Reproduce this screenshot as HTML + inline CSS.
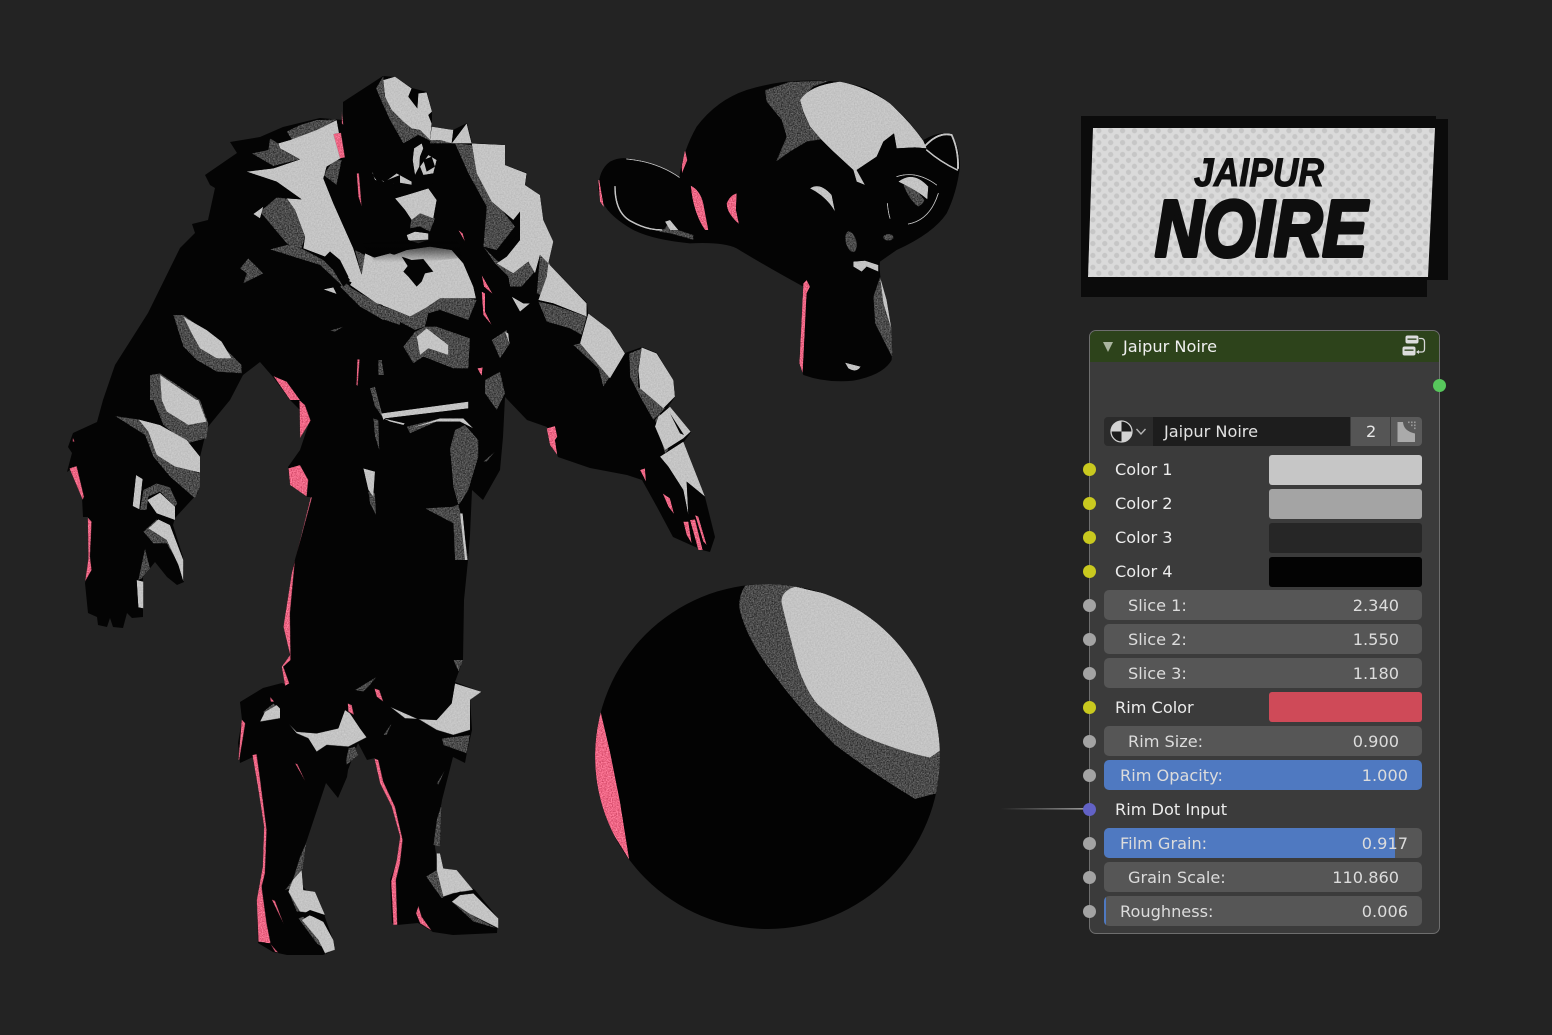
<!DOCTYPE html>
<html><head><meta charset="utf-8">
<style>
html,body{margin:0;padding:0;background:#232323;width:1552px;height:1035px;overflow:hidden}
body{position:relative;font-family:"DejaVu Sans","Liberation Sans",sans-serif;font-size:16.15px}
svg.art{position:absolute;left:0;top:0}
.node{position:absolute;left:1089px;top:330px;width:349px;height:602px;background:#3b3b3b;border:1.5px solid #6e6e6e;border-radius:7px;overflow:hidden}
.hd{position:absolute;left:0;top:0;right:0;height:31px;background:#2d431b}
.t{position:absolute;white-space:nowrap;line-height:32px;height:32px;color:#ececec}
.f{position:absolute;height:29.5px;border-radius:5px}
.s{background:#565656;left:1104px;width:318px}
.sw{left:1269px;width:153px;border-radius:3px}
.sl{color:#dcdcdc}
.so{position:absolute;width:13px;height:13px;border-radius:50%}
.g{background:#a3a3a3}.y{background:#c9c91f}
.abs{position:absolute}
</style></head><body>
<svg class="art" width="1552" height="1035" viewBox="0 0 1552 1035">
<defs>
<filter id="n1" filterUnits="userSpaceOnUse" x="0" y="0" width="1552" height="1035" color-interpolation-filters="sRGB">
<feTurbulence type="fractalNoise" baseFrequency="0.75" numOctaves="2" seed="4" result="t"/>
<feColorMatrix in="t" type="matrix" values="1 0 0 0 0 1 0 0 0 0 1 0 0 0 0 0 0 0 0 1" result="m"/>
<feComposite in="SourceGraphic" in2="m" operator="arithmetic" k1="0" k2="1" k3="0.55" k4="-0.275" result="c"/>
<feComposite in="c" in2="SourceAlpha" operator="in"/>
</filter>
<filter id="n2" filterUnits="userSpaceOnUse" x="0" y="0" width="1552" height="1035" color-interpolation-filters="sRGB">
<feTurbulence type="fractalNoise" baseFrequency="0.7" numOctaves="2" seed="9" result="t"/>
<feColorMatrix in="t" type="matrix" values="1 0 0 0 0 1 0 0 0 0 1 0 0 0 0 0 0 0 0 1" result="m"/>
<feComposite in="SourceGraphic" in2="m" operator="arithmetic" k1="0" k2="1" k3="0.14" k4="-0.07" result="c"/>
<feComposite in="c" in2="SourceAlpha" operator="in"/>
</filter>
<filter id="n3" filterUnits="userSpaceOnUse" x="0" y="0" width="1552" height="1035" color-interpolation-filters="sRGB">
<feTurbulence type="fractalNoise" baseFrequency="0.8" numOctaves="2" seed="2" result="t"/>
<feColorMatrix in="t" type="matrix" values="1 0 0 0 0 1 0 0 0 0 1 0 0 0 0 0 0 0 0 1" result="m"/>
<feComposite in="SourceGraphic" in2="m" operator="arithmetic" k1="0" k2="1" k3="0.5" k4="-0.25" result="c"/>
<feComposite in="c" in2="SourceAlpha" operator="in"/>
</filter>
<pattern id="dots" width="8.4" height="8.4" patternUnits="userSpaceOnUse" patternTransform="rotate(45)">
<rect width="8.4" height="8.4" fill="#dadada"/><circle cx="4.2" cy="4.2" r="2.6" fill="#c6c6c6"/>
</pattern>
<clipPath id="sph"><circle cx="767.5" cy="756.5" r="172.5"/></clipPath>
<linearGradient id="lk" x1="0" x2="1" y1="0" y2="0"><stop offset="0" stop-color="#888" stop-opacity="0"/><stop offset="1" stop-color="#999"/></linearGradient>
<linearGradient id="fade" x1="0" x2="0" y1="0" y2="1"><stop offset="0" stop-color="#040404"/><stop offset="1" stop-color="#040404" stop-opacity="0"/></linearGradient>
</defs>

<!-- character silhouette -->
<polygon fill="#040404" points="383,76 395,77 412,88 427,92 432,112 432,127 453,130 467,123 472,143 505,145 505,165 527,173 525,185 540,195 543,220 553,242 548,263 587,303 588,313 610,330 625,353 642,347 657,353 673,380 675,397 668,407 691,432 683,443 705,497 715,537 710,552 702,550 673,537 657,507 642,480 627,475 590,468 558,457 547,427 527,420 505,397 503,437 500,470 483,500 472,490 470,535 468,560 464,600 463,660 455,682 482,692 470,698 472,730 467,752 465,763 453,757 442,800 435,847 438,867 475,890 498,918 497,933 453,935 433,932 418,923 397,925 392,923 390,880 400,853 402,837 393,803 380,777 375,758 367,760 358,743 348,770 347,777 338,798 326,783 307,840 297,867 303,887 320,903 333,940 335,950 323,955 287,955 273,952 258,943 257,900 263,873 265,827 253,757 240,763 238,743 242,720 240,702 263,688 282,683 287,685 282,667 290,657 285,627 293,567 312,497 307,497 290,483 288,467 300,450 310,420 290,400 273,377 260,362 243,375 230,400 207,428 200,457 198,493 175,518 173,525 183,557 184,582 177,585 167,577 155,562 143,577 143,617 132,618 127,613 123,628 113,627 110,618 107,627 98,625 97,617 88,613 85,583 90,563 88,517 83,517 82,497 70,470 67,472 72,453 68,447 73,433 97,422 103,400 115,365 148,313 180,248 195,233 192,224 208,220 215,188 210,185 205,175 237,153 230,142 260,137 283,127 320,118 343,120 343,102"/>
<!-- monkey silhouette -->
<g transform="translate(590,70) scale(.33333)">
<path fill="#040404" d="M25 360 Q25 300 60 275 Q85 262 110 265 Q190 272 268 320 Q280 240 320 170 Q380 90 470 60 Q560 32 650 32 Q750 28 830 55 Q900 90 960 160 L1000 210 Q1050 180 1085 195 Q1110 230 1110 290 Q1100 370 1070 430 Q1030 490 920 540 L870 575 Q865 620 890 700 Q910 790 905 870 Q880 915 790 932 Q710 940 640 915 L628 880 L640 650 Q530 590 440 535 Q400 515 300 520 Q190 510 130 480 Q60 440 40 400 Z"/>
</g>
<!-- sphere -->
<circle cx="767.5" cy="756.5" r="172.5" fill="#030303"/>

<!-- mid gray -->
<g filter="url(#n1)" fill="#4b4b4b">
<g clip-path="url(#sph)"><g transform="translate(585,575) scale(.33333)">
<path d="M490 20 Q455 60 465 110 Q490 200 560 290 Q640 400 750 510 Q870 600 990 672 L1055 655 L1080 530 L640 20 Z"/>
</g></g>
<g transform="translate(60,60) scale(.33333)">
<polygon points="630,235 655,250 660,265 720,298 640,318 575,280 625,270"/>
<polygon points="680,215 720,195 770,180 830,178 770,212 700,245"/>
<polygon points="600,455 650,412 680,415 705,450 735,530 725,565 680,550"/>
<polygon points="565,595 610,640 550,670 560,640 540,625"/>
<polygon points="340,765 370,765 440,815 510,880 545,915 545,940 470,935 410,900 370,860"/>
<polygon points="270,945 300,940 420,1020 270,1020"/>
<polygon points="790,345 820,300 845,300 830,375"/>
<polygon points="885,570 905,645 925,590"/>
<polygon points="630,568 690,552 730,568 790,600 880,690 970,755 1020,775 1020,795 960,775 860,690 780,615"/>
<polygon points="955,900 965,900 972,945 955,945"/>
<polygon points="810,812 850,800 825,815"/>
</g>
<g transform="translate(340,60) scale(.33333)">
<polygon points="130,48 108,85 125,125 150,180 190,250 235,225 275,245 230,150 135,110"/>
<polygon points="275,215 340,208 335,250 270,250"/>
<polygon points="345,250 395,255 420,345 470,430 525,500 470,570 430,560 440,440 385,340"/>
<polygon points="430,560 465,610 505,650 510,680 545,680 580,640 590,590 600,585 590,700 610,710 635,650 630,610 600,585 565,605 520,640 470,600"/>
<polygon points="10,670 130,740 150,745 210,770 295,715 385,715 410,720 385,780 300,750 265,760 255,800 225,810 150,770 130,780 60,740 0,680"/>
<polygon points="190,860 225,815 255,800 290,800 390,835 385,925 340,925 250,890 220,910"/>
<polygon points="90,985 105,980 130,1075 105,1040"/>
<polygon points="200,1100 300,1075 370,1075 400,1105 360,1085 290,1085 210,1120"/>
<polygon points="345,1110 375,1095 415,1140 415,1190 385,1290 360,1330 340,1340 255,1345 340,1390 345,1500 385,1500 365,1370 340,1280 330,1165"/>
<polygon points="100,1075 115,1080 118,1170 105,1130"/>
<polygon points="85,1295 105,1300 108,1365 90,1330"/>
<polygon points="115,905 125,900 130,945 115,945"/>
<polygon points="435,960 480,935 495,1000 470,1050 435,1000"/>
<polygon points="455,840 500,810 510,850 480,895"/>
<polygon points="430,1205 465,1175 440,1205"/>
<polygon points="595,725 640,735 740,770 725,825 690,805 620,785"/>
<polygon points="700,855 720,850 810,950 790,980 775,925"/>
<polygon points="868,880 905,865 895,925 895,980 975,1045 940,1080 900,1010 870,950"/>
<polygon points="945,1080 960,1060 985,1170 975,1180"/>
<polygon points="215,470 240,460 285,475 270,515 240,500 210,505"/>
</g>
<g transform="translate(60,400) scale(.33333)">
<polygon points="280,0 420,0 445,70 440,115 380,130 310,75"/>
<polygon points="165,48 235,58 270,90 290,165 350,195 420,220 420,260 405,295 330,230 280,170 255,105"/>
<polygon points="240,330 250,270 290,250 330,262 352,310 345,320 300,275 265,290 260,330"/>
<polygon points="250,395 290,358 320,375 340,430 360,480 372,545 355,490 320,430 280,430"/>
<polygon points="255,445 270,505 245,535 235,540"/>
</g>
<g transform="translate(220,660) scale(.33333)">
<polygon points="130,155 160,130 180,145 135,180"/>
<polygon points="380,315 415,285 405,260 385,265 378,300"/>
<polygon points="665,235 750,225 740,280 670,255"/>
<polygon points="405,90 470,50 450,75 430,95"/>
<polygon points="490,225 515,190 500,225"/>
<polygon points="195,690 230,680 248,628 260,545 240,590 218,660"/>
<polygon points="205,695 225,690 245,755 230,755"/>
<polygon points="235,775 250,770 295,840 320,870 290,850"/>
<polygon points="618,650 650,630 700,690 665,715"/>
<polygon points="695,725 745,760 830,805 760,785"/>
<polygon points="650,370 675,330 655,375"/>
<polygon points="640,555 650,480 665,430 660,560"/>
<polygon points="700,0 730,0 715,35"/>
</g>
<g transform="translate(590,70) scale(.33333)">
<polygon points="525,60 600,35 720,32 670,50 630,90 640,125 660,170 695,208 650,215 600,245 558,275 590,200 575,150 530,95"/>
<ellipse cx="783" cy="515" rx="16" ry="32" transform="rotate(-15 783 515)"/>
<ellipse cx="895" cy="502" rx="16" ry="10"/>
<polygon points="870,620 890,700 905,780 908,865 880,810 855,760 850,680"/>
<polygon points="225,475 240,450 265,480 310,495 310,510 240,490 205,485"/>
<path d="M940 345 Q960 335 1000 385 Q1010 395 985 410 Q960 395 940 345 Z"/>
</g>
</g>

<!-- light gray -->
<g filter="url(#n2)" fill="#c4c4c4">
<g clip-path="url(#sph)"><g transform="translate(585,575) scale(.33333)">
<path d="M630 35 Q585 50 590 85 Q610 170 640 280 Q670 360 700 390 Q780 460 850 490 Q950 530 1035 548 L1075 520 L1040 350 L960 210 L850 110 L740 60 Z"/>
</g></g>
<g transform="translate(60,60) scale(.33333)">
<polygon points="655,250 690,240 770,210 830,180 850,290 800,320 790,355 820,430 880,565 905,645 885,660 870,660 840,600 810,575 795,590 730,565 735,530 705,450 680,415 725,418 650,365 560,335 640,325 720,298 660,265"/>
<polygon points="885,650 905,645 915,600 990,580 1020,590 1020,750 950,730 870,675"/>
<polygon points="370,770 440,810 485,845 515,895 470,895 420,865 395,820"/>
<polygon points="300,945 410,1020 305,1020"/>
<polygon points="580,462 610,440 600,475"/>
<polygon points="790,688 820,682 830,702"/>
</g>
<g transform="translate(340,60) scale(.33333)">
<polygon points="130,60 165,50 215,85 205,110 232,145 235,100 260,97 276,155 265,165 275,190 270,240 240,210 215,205 190,185 155,150 135,110"/>
<polygon points="275,200 340,210 335,250 380,190 395,250 495,255 495,315 560,340 555,375 600,405 610,480 640,545 625,610 600,585 585,640 565,605 520,640 470,610 500,590 540,540 540,455 520,480 455,425 410,340 395,250 335,250 300,240 270,240"/>
<polygon points="0,480 35,570 65,645 75,580 120,600 200,570 270,560 335,570 370,610 400,680 408,715 380,715 300,715 255,745 210,770 150,745 130,738 60,680 20,660 30,640 0,550"/>
<polygon points="165,415 200,405 265,385 290,420 280,475 240,460 215,480 195,450"/>
<polygon points="200,525 225,515 265,520 265,540 235,550 205,540"/>
<polygon points="95,335 110,355 135,365 170,340 215,365 215,375 140,370 105,360"/>
<polygon points="222,265 245,250 250,265 240,290 238,320 225,345 218,300"/>
<polygon points="240,320 265,285 290,300 280,340 250,345"/>
<polygon points="230,830 260,805 325,855 325,885 265,865 240,885"/>
<polygon points="105,1000 125,1060 385,1025 385,1045 135,1075 130,1080"/>
<polygon points="130,1075 195,1090 190,1095 150,1085"/>
<polygon points="210,1105 300,1075 370,1075 400,1105 360,1085 290,1085"/>
<polygon points="360,1360 368,1360 382,1500 375,1500"/>
<polygon points="70,1225 105,1235 100,1310 85,1290"/>
<polygon points="495,815 505,820 508,850"/>
<polygon points="625,610 740,730 740,770 640,730 595,720 620,650"/>
<polygon points="745,760 810,810 855,880 810,955 720,850"/>
<polygon points="905,862 950,880 1000,960 1005,1010 970,1045 900,985 895,930"/>
<polygon points="955,1070 990,1040 1052,1115 1030,1135 975,1170 945,1100"/>
<polygon points="960,1190 1030,1145 1095,1310 1040,1265 1045,1365 1030,1290 985,1220"/>
<polygon points="515,710 550,730 570,730 540,755"/>
</g>
<g transform="translate(60,400) scale(.33333)">
<polygon points="305,0 415,0 440,65 385,75 320,35"/>
<polygon points="235,58 300,75 380,120 420,170 420,218 345,200 290,165 265,95"/>
<polygon points="228,225 248,237 238,328 218,318"/>
<polygon points="262,300 300,278 345,320 345,360 290,340"/>
<polygon points="265,385 295,358 330,375 370,480 370,545 355,495 320,420"/>
<polygon points="230,540 250,545 250,625 235,622"/>
</g>
<g transform="translate(220,660) scale(.33333)">
<polygon points="120,185 135,155 170,135 180,145 180,175 205,190 230,215 290,220 355,205 375,150 390,160 420,205 440,232 385,260 320,255 290,275 265,235 230,220 205,190 180,175"/>
<polygon points="510,140 555,175 650,180 695,130 705,70 785,95 750,120 750,210 700,225 650,210 600,180"/>
<polygon points="218,660 245,630 250,690 285,695 315,765 240,755 205,695"/>
<polygon points="245,780 270,765 310,785 340,840 345,870 315,880 295,840"/>
<polygon points="650,580 660,580 670,625 710,630 760,690 700,700 670,710 650,630"/>
<polygon points="695,725 720,705 760,700 835,775 835,805 745,760"/>
</g>
<g transform="translate(590,70) scale(.33333)">
<path d="M630 90 Q660 45 750 35 Q830 50 900 100 Q960 155 1000 212 L1010 235 L975 232 L920 235 L912 190 L880 215 L860 260 L800 300 L825 345 L800 335 L790 300 L725 240 L695 210 L660 170 L640 125 Z"/>
<path d="M925 335 Q970 300 1015 350 L1012 388 Q985 365 945 345 Z"/>
<path d="M660 355 Q690 335 725 375 L735 425 Q710 380 660 355 Z"/>
<polygon points="790,575 825,572 865,585 865,605 830,590 815,605 790,590"/>
<polygon points="870,620 890,690 905,780 880,700"/>
<path d="M765 878 L812 890 Q800 910 775 895 Z"/>
<polygon points="225,455 240,450 265,480 240,480"/>
<g fill="none" stroke="#c4c4c4" stroke-linecap="round">
<path d="M75 350 Q75 430 125 455 Q170 480 215 480" stroke-width="5"/>
<path d="M110 267 Q200 275 268 322" stroke-width="3"/>
<path d="M1005 228 Q1045 185 1085 195 Q1106 240 1104 295" stroke-width="6"/>
<path d="M1010 240 Q1050 275 1102 300" stroke-width="5"/>
<path d="M892 400 Q895 430 900 445" stroke-width="3"/>
<path d="M955 462 Q1020 450 1045 370" stroke-width="3"/>
<path d="M920 320 Q980 300 1040 345" stroke-width="3"/>
</g>
</g>
</g>

<!-- pink -->
<g filter="url(#n3)" fill="#ee6685">
<g clip-path="url(#sph)"><g transform="translate(585,575) scale(.33333)">
<polygon points="47,410 20,500 30,650 80,770 133,855 105,680 75,530"/>
</g></g>
<g transform="translate(60,60) scale(.33333)">
<polygon points="820,222 843,218 855,292 840,295"/>
<polygon points="845,150 850,195 845,190"/>
<polygon points="890,340 897,340 905,440 895,410"/>
<polygon points="892,898 899,898 893,978 889,975"/>
<polygon points="640,948 680,965 720,1020 690,1020"/>
</g>
<g transform="translate(340,60) scale(.33333)">
<polygon points="425,645 458,702 432,680"/>
<polygon points="425,695 435,700 435,755 455,795 430,765"/>
<polygon points="355,510 368,520 375,545"/>
<polygon points="412,925 428,922 425,948"/>
<polygon points="620,1105 645,1098 652,1130 645,1140 652,1185 630,1155"/>
<polygon points="900,1230 915,1225 918,1265"/>
<polygon points="968,1300 990,1315 1002,1362 985,1340"/>
<polygon points="1030,1385 1045,1385 1055,1450 1040,1425"/>
<polygon points="1050,1380 1065,1378 1088,1470 1075,1470"/>
<polygon points="1065,1365 1075,1370 1100,1455 1090,1445"/>
</g>
<g transform="translate(60,400) scale(.33333)">
<polygon points="28,205 50,198 72,290 68,300"/>
<polygon points="83,352 95,365 90,470 95,510 75,545 85,475"/>
<polygon points="718,0 735,15 752,62 720,115"/>
<polygon points="685,205 720,195 745,240 740,290 690,255"/>
<polygon points="752,292 756,292 705,480 690,640 692,780 670,800 688,850 675,858 665,800 690,765 670,680 695,520"/>
<polygon points="38,112 44,125 38,125"/>
</g>
<g transform="translate(220,660) scale(.33333)">
<polygon points="97,285 110,282 122,370 140,510 135,640 125,680 140,790 152,850 115,845 110,720 128,620 132,500 115,390"/>
<polygon points="65,178 76,190 58,300 55,300"/>
<polygon points="225,310 232,312 258,368"/>
<polygon points="155,718 165,722 192,795"/>
<polygon points="150,850 175,878 165,875"/>
<polygon points="150,110 163,125 152,125"/>
<polygon points="383,130 395,135 402,165 385,155"/>
<polygon points="463,295 475,300 490,365 525,440 548,540 540,610 528,660 532,795 520,795 513,665 530,600 540,530 515,440 480,370"/>
<polygon points="595,737 605,770 635,812 600,790 588,760"/>
<polygon points="463,85 478,90 490,125 470,110"/>
</g>
<g transform="translate(590,70) scale(.33333)">
<path d="M302 347 Q330 360 340 400 L355 480 L345 480 Q310 430 302 347 Z"/>
<path d="M410 400 Q420 375 440 370 L438 420 L447 462 Q410 430 410 400 Z"/>
<polygon points="285,240 292,270 276,310 275,290"/>
<polygon points="25,330 28,330 42,412 30,395"/>
<polygon points="640,640 650,630 660,650 650,670 638,910 628,880"/>
</g>
</g>

<!-- small black details -->
<g fill="#040404">
<g transform="translate(340,60) scale(.33333)">
<polygon points="185,590 215,600 250,597 280,635 255,640 245,665 230,680 205,650 190,635 203,618"/>
<polygon points="470,570 540,520 540,540 490,575"/>
<polygon points="250,300 275,290 285,320 260,335"/>
<polygon points="990,1060 1032,1125 1020,1120"/>
<polygon points="160,365 220,375 280,370 230,395 170,400"/>
</g>
<g transform="translate(60,60) scale(.33333)">
<polygon points="810,575 870,660 850,680 795,590"/>
<polygon points="930,335 970,365 1020,345 1020,370 960,375"/>
</g>
<g transform="translate(220,660) scale(.33333)">
<polygon points="235,770 270,750 315,765 310,780 265,765"/>
<polygon points="670,715 720,695 760,695 715,705"/>
</g>
</g>
<polygon fill="url(#fade)" points="362,243 458,238 462,258 420,262 375,262"/>

<!-- logo -->
<polygon fill="#0b0b0b" points="1081,116 1436,116 1436,119 1448,119 1448,280 1427,280 1427,297 1081,297"/>
<polygon fill="url(#dots)" points="1093,128 1435,128 1428,277 1088,277"/>
<text x="1194" y="186" font-family="Liberation Sans" font-weight="bold" font-style="italic" font-size="40" fill="#0e0e0e" stroke="#0e0e0e" stroke-width="1" textLength="130" lengthAdjust="spacingAndGlyphs">JAIPUR</text>
<text x="1155" y="256" font-family="Liberation Sans" font-weight="bold" font-style="italic" font-size="80" fill="#0e0e0e" stroke="#0e0e0e" stroke-width="4" textLength="212" lengthAdjust="spacingAndGlyphs" stroke-linejoin="round">NOIRE</text>

<rect x="1000" y="808" width="84" height="1.6" fill="url(#lk)"/>
</svg>

<div class="node"><div class="hd"></div></div>

<svg class="abs" style="left:1100px;top:338px" width="16" height="16"><polygon points="3,4 13,4 8,14" fill="#aab5a0"/></svg>
<div class="t" style="left:1123px;top:331px;color:#f0f0f0">Jaipur Noire</div>
<svg class="abs" style="left:1400px;top:332px" width="30" height="30" viewBox="0 0 30 30">
<rect x="5.5" y="3.5" width="13" height="8" rx="2" fill="#dcdcdc"/><rect x="7.5" y="6.5" width="9" height="1.3" fill="#2d431b"/>
<rect x="2.5" y="14.5" width="13" height="9" rx="2" fill="#dcdcdc"/><rect x="4.5" y="17.5" width="9" height="1.3" fill="#2d431b"/>
<path d="M19 6.5 H22 Q24.5 7 24.5 10 V17 Q24.5 20 22 20 H17" fill="none" stroke="#d8d8d8" stroke-width="1.3"/>
<polygon points="16,20 19,18 19,22" fill="#d8d8d8"/>
</svg>

<div class="so" style="left:1433px;top:378.5px;background:#57c75c"></div>

<!-- selector row -->
<div class="abs" style="left:1104px;top:417px;width:49px;height:29px;background:#2b2b2b;border-radius:4px 0 0 4px"></div>
<div class="abs" style="left:1153px;top:417px;width:197px;height:29px;background:#1d1d1d"></div>
<div class="abs" style="left:1351px;top:417px;width:39px;height:29px;background:#555"></div>
<div class="abs" style="left:1391px;top:417px;width:31px;height:29px;background:#5a5a5a;border-radius:0 4px 4px 0"></div>
<svg class="abs" style="left:1108px;top:419px" width="40" height="26" viewBox="0 0 40 26">
<circle cx="13.500" cy="12.500" r="10.500" fill="#1d1d1d" stroke="#d0d0d0" stroke-width="1.300"/>
<path d="M13.500 12.500 V2 A10.500 10.500 0 0 0 3 12.500 Z" fill="#d4d4d4"/>
<path d="M13.500 12.500 H24 A10.500 10.500 0 0 1 13.500 23 Z" fill="#d4d4d4"/>
<path d="M28.500 10 L33 15 L37.500 10" fill="none" stroke="#b5b5b5" stroke-width="1.400"/>
</svg>
<div class="t" style="left:1164px;top:416px;color:#e2e2e2">Jaipur Noire</div>
<div class="t" style="left:1366px;top:416px;color:#e8e8e8">2</div>
<svg class="abs" style="left:1396px;top:420px" width="22" height="24" viewBox="0 0 22 24">
<path d="M1.500 2 H7 Q7.500 11 19 13.500 V22 H1.500 Z" fill="#aaa"/>
<g fill="#9a9a9a"><rect x="12" y="1.500" width="1.600" height="1.600"/><rect x="15" y="1.500" width="1.600" height="1.600"/><rect x="18" y="1.500" width="1.600" height="1.600"/><rect x="15" y="4.500" width="1.600" height="1.600"/><rect x="18" y="4.500" width="1.600" height="1.600"/><rect x="18" y="7.500" width="1.600" height="1.600"/></g>
</svg>

<!-- sockets -->
<div class="so y" style="left:1083px;top:463px"></div>
<div class="so y" style="left:1083px;top:497px"></div>
<div class="so y" style="left:1083px;top:531px"></div>
<div class="so y" style="left:1083px;top:565px"></div>
<div class="so g" style="left:1083px;top:599px"></div>
<div class="so g" style="left:1083px;top:633px"></div>
<div class="so g" style="left:1083px;top:667px"></div>
<div class="so y" style="left:1083px;top:701px"></div>
<div class="so g" style="left:1083px;top:735px"></div>
<div class="so g" style="left:1083px;top:769px"></div>
<div class="so" style="left:1083px;top:803px;background:#6262c6"></div>
<div class="so g" style="left:1083px;top:837px"></div>
<div class="so g" style="left:1083px;top:871px"></div>
<div class="so g" style="left:1083px;top:905px"></div>

<!-- colors -->
<div class="t" style="left:1115px;top:454px">Color 1</div><div class="f sw" style="top:455px;background:#c6c6c6"></div>
<div class="t" style="left:1115px;top:488px">Color 2</div><div class="f sw" style="top:489px;background:#a4a4a4"></div>
<div class="t" style="left:1115px;top:522px">Color 3</div><div class="f sw" style="top:523px;background:#262626"></div>
<div class="t" style="left:1115px;top:556px">Color 4</div><div class="f sw" style="top:557px;background:#030303"></div>

<!-- sliders -->
<div class="f s" style="top:590px"></div><div class="t sl" style="left:1128px;top:590px">Slice 1:</div><div class="t sl" style="right:153px;top:590px">2.340</div>
<div class="f s" style="top:624px"></div><div class="t sl" style="left:1128px;top:624px">Slice 2:</div><div class="t sl" style="right:153px;top:624px">1.550</div>
<div class="f s" style="top:658px"></div><div class="t sl" style="left:1128px;top:658px">Slice 3:</div><div class="t sl" style="right:153px;top:658px">1.180</div>
<div class="t" style="left:1115px;top:692px">Rim Color</div><div class="f sw" style="top:692px;background:#cf4a58"></div>
<div class="f s" style="top:726px"></div><div class="t sl" style="left:1128px;top:726px">Rim Size:</div><div class="t sl" style="right:153px;top:726px">0.900</div>
<div class="f s" style="top:760px;background:#4f79c1"></div><div class="t sl" style="left:1120px;top:760px">Rim Opacity:</div><div class="t sl" style="right:144px;top:760px">1.000</div>
<div class="t" style="left:1115px;top:794px">Rim Dot Input</div>
<div class="f s" style="top:828px;overflow:hidden"><div style="width:291px;height:100%;background:#4f79c1"></div></div><div class="t sl" style="left:1120px;top:828px">Film Grain:</div><div class="t sl" style="right:144px;top:828px">0.917</div>
<div class="f s" style="top:862px"></div><div class="t sl" style="left:1128px;top:862px">Grain Scale:</div><div class="t sl" style="right:153px;top:862px">110.860</div>
<div class="f s" style="top:896px;overflow:hidden"><div style="width:2px;height:100%;background:#4f79c1"></div></div><div class="t sl" style="left:1120px;top:896px">Roughness:</div><div class="t sl" style="right:144px;top:896px">0.006</div>
</body></html>
